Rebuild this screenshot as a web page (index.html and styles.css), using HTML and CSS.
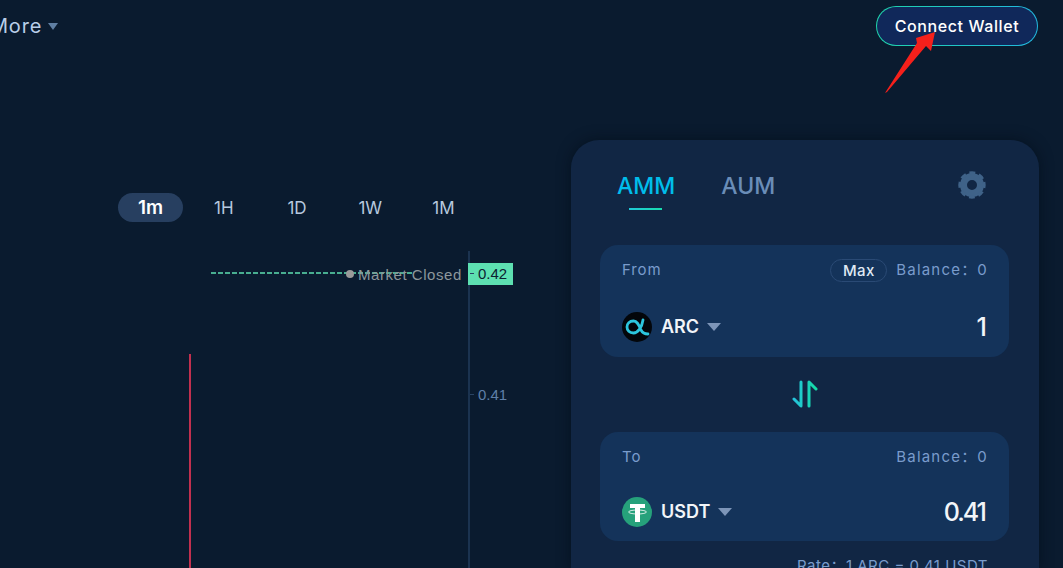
FILE: index.html
```html
<!DOCTYPE html>
<html lang="en">
<head>
    <meta charset="UTF-8">
    <title>Swap</title>
    <link rel="stylesheet" href="styles.css">
</head>
<body>
    <div class="top">
        <div class="nav-more">More <span class="caret caret-small"></span></div>
        <button class="connect">Connect Wallet</button>
    </div>

    <div class="main">
        <div class="chart-side">
            <div class="ranges">
                <span class="range active">1m</span>
                <span class="range">1H</span>
                <span class="range">1D</span>
                <span class="range">1W</span>
                <span class="range">1M</span>
            </div>
            <div class="chart">
                <svg class="price-line" width="201" height="2" viewBox="0 0 201 2">
                    <line x1="0" y1="1" x2="201" y2="1" stroke="#5de0b1" stroke-width="1.600" stroke-dasharray="5 2"/>
                </svg>
                <div class="market-dot"></div>
                <div class="market-text">Market Closed</div>
                <div class="axis"></div>
                <div class="price-tag">0.42</div>
                <div class="tick tick-now"></div>
                <div class="tick tick-low"></div>
                <div class="axis-label">0.41</div>
                <div class="candle"></div>
            </div>
        </div>

        <div class="card">
            <div class="tabs">
                <div class="tab active">AMM</div>
                <div class="tab">AUM</div>
                <svg class="gear" width="30" height="30" viewBox="0 0 30 30">
                    <circle cx="15" cy="15" r="8.5" fill="none" stroke="#3f6288" stroke-width="7"/>
                    <circle cx="15" cy="15" r="12" fill="none" stroke="#3f6288" stroke-width="3.4" stroke-dasharray="5.6 3.82" transform="rotate(-13.4 15 15)"/>
                </svg>
            </div>

            <div class="box">
                <div class="row">
                    <span class="label">From</span>
                    <span class="balance"><span class="max">Max</span>Balance：0</span>
                </div>
                <div class="row row-token">
                    <span class="token">
                        <svg class="coin" width="30" height="30" viewBox="0 0 30 30">
                            <circle cx="15" cy="15" r="15" fill="#03060a"/>
                            <path d="M21 8C20 15 16 21 11.500 21 7.500 21 5 18.500 5 15 5 11.500 7.500 9 11.500 9 16 9 17 14 19 18 20.500 21 23 22 26 22" fill="none" stroke="#2cc6de" stroke-width="2.800" stroke-linecap="round"/>
                        </svg>
                        ARC <span class="caret"></span>
                    </span>
                    <span class="amount">1</span>
                </div>
            </div>

            <div class="swap">
                <svg width="26" height="28" viewBox="0 0 26 28">
                    <defs>
                        <linearGradient id="swapGrad" x1="0" y1="0" x2="1" y2="0">
                            <stop offset="0" stop-color="#25c3dc"/>
                            <stop offset="1" stop-color="#14dba6"/>
                        </linearGradient>
                    </defs>
                    <path d="M9 2v24L2 19M17 26V2l7 7" fill="none" stroke="url(#swapGrad)" stroke-width="3" stroke-linecap="round" stroke-linejoin="round"/>
                </svg>
            </div>

            <div class="box box-to">
                <div class="row">
                    <span class="label">To</span>
                    <span class="balance">Balance：0</span>
                </div>
                <div class="row row-token">
                    <span class="token">
                        <svg class="coin" width="30" height="30" viewBox="0 0 30 30">
                            <circle cx="15" cy="15" r="15" fill="#26a17b"/>
                            <rect x="8" y="7" width="15" height="4" fill="#fff"/>
                            <rect x="13" y="7" width="5" height="18" fill="#fff"/>
                            <ellipse cx="15.500" cy="15" rx="9" ry="2" fill="none" stroke="#fff" stroke-width="0.8"/>
                        </svg>
                        USDT <span class="caret"></span>
                    </span>
                    <span class="amount">0.41</span>
                </div>
            </div>

            <div class="rate">Rate：1 ARC = 0.41 USDT</div>
        </div>
    </div>

    <svg class="pointer" width="60" height="70" viewBox="0 0 60 70">
        <polygon points="5,63 37,13 36,8 55,2 51,21 46,16 7,62" fill="#f5201b"/>
    </svg>
</body>
</html>
```

FILE: styles.css
```css
body {
    margin: 0;
    height: 568px;
    overflow: hidden;
    background-color: #0a1b2f;
    font-family: Inter, "Noto Sans CJK SC", sans-serif;
    position: relative;
}

.top {
    display: flex;
    justify-content: space-between;
    align-items: center;
    height: 40px;
    padding: 6px 25px 0 0;
}

.nav-more {
    margin-left: -10px;
    color: #b9cee8;
    font-size: 20px;
    letter-spacing: 0.8px;
    display: flex;
    align-items: center;
    gap: 6px;
}

.caret {
    display: inline-block;
    width: 0;
    height: 0;
    border-left: 7px solid transparent;
    border-right: 7px solid transparent;
    border-top: 8px solid #7d95b8;
    margin-left: 3px;
}

.caret-small {
    border-left-width: 5px;
    border-right-width: 5px;
    border-top-width: 7px;
    border-top-color: #5f7fa3;
    margin-left: 0;
}

.connect {
    width: 162px;
    height: 40px;
    border: 1px solid transparent;
    border-radius: 20px;
    background: linear-gradient(#10285a, #10285a) padding-box, linear-gradient(to right, #1fd4ab, #22b8e0) border-box;
    color: #fff;
    font-family: inherit;
    font-size: 16px;
    letter-spacing: 0.6px;
    font-weight: 500;
    padding: 0;
}

.main {
    display: flex;
    margin-top: 94px;
}

.chart-side {
    width: 571px;
    padding-top: 53px;
}

.ranges {
    display: flex;
    gap: 8.250px;
    margin-left: 118px;
}

.range {
    width: 65px;
    height: 29px;
    border-radius: 15px;
    text-align: center;
    line-height: 30px;
    font-size: 17px;
    color: #b7c9df;
}

.range.active {
    background-color: #273f60;
    color: #fff;
    font-weight: 600;
    font-size: 19px;
}

.chart {
    position: relative;
    width: 513px;
    height: 318px;
    margin-top: 28px;
    font-family: "Liberation Sans", Arial, sans-serif;
}

.axis {
    position: absolute;
    left: 468px;
    top: 1px;
    bottom: 0;
    width: 2px;
    background-color: #1b3350;
}

.price-line {
    position: absolute;
    left: 211px;
    top: 22px;
}

.market-dot {
    position: absolute;
    left: 346px;
    top: 20px;
    width: 8px;
    height: 8px;
    border-radius: 50%;
    background-color: #9a9a9a;
}

.market-text {
    position: absolute;
    left: 358px;
    top: 16px;
    font-size: 15px;
    letter-spacing: 0.55px;
    color: #8d979c;
}

.price-tag {
    position: absolute;
    left: 468px;
    top: 13px;
    width: 35px;
    height: 22px;
    padding-left: 10px;
    line-height: 22px;
    font-size: 15px;
    background-color: #5de0b1;
    color: #0c2030;
}

.tick {
    position: absolute;
    left: 470px;
    width: 4px;
    height: 1px;
    background-color: #2a4464;
}

.tick-now {
    top: 23px;
}

.tick-low {
    top: 144px;
}

.axis-label {
    position: absolute;
    left: 478px;
    top: 136px;
    font-size: 15px;
    color: #5f7fa8;
}

.candle {
    position: absolute;
    left: 189px;
    top: 104px;
    bottom: 0;
    width: 2px;
    background-color: #c2304f;
}

.card {
    width: 409px;
    height: 428px;
    padding: 0 30px 0 29px;
    background-color: #112644;
    border-radius: 28px 28px 0 0;
    box-shadow: 0 0 14px rgba(4, 12, 22, 0.6);
    flex-shrink: 0;
}

.tabs {
    display: flex;
    align-items: flex-start;
    height: 105px;
    padding-left: 17px;
    gap: 46px;
    position: relative;
}

.tab {
    margin-top: 32px;
    font-size: 23px;
    line-height: 28px;
    font-weight: 500;
    color: #6a8db8;
    position: relative;
}

.tab.active {
    color: #00bdeb;
}

.tab.active::after {
    content: "";
    position: absolute;
    left: 12px;
    right: 13px;
    top: 36px;
    height: 2px;
    background: linear-gradient(to right, #20c9d8, #18dcae);
}

.gear {
    margin-left: auto;
    margin-right: 22px;
    margin-top: 30px;
}

.box {
    height: 112px;
    padding: 0 22px;
    border-radius: 18px;
    background-color: #14335a;
    box-sizing: border-box;
}

.box-to {
    height: 109px;
}

.row {
    display: flex;
    justify-content: space-between;
    align-items: center;
    height: 48px;
    box-sizing: border-box;
    padding-top: 2px;
    font-size: 15px;
    line-height: 18px;
    letter-spacing: 0.9px;
    color: #7a9ccc;
}

.row-token {
    height: 30px;
    padding-top: 0;
    margin-top: 19px;
    letter-spacing: 0;
}

.box-to .row-token {
    margin-top: 17px;
}

.balance {
    display: flex;
    align-items: center;
    margin-right: -1px;
    letter-spacing: 1.2px;
}

.max {
    width: 55px;
    height: 21px;
    line-height: 21px;
    text-align: center;
    margin-right: 9px;
    border: 1px solid #2a4a75;
    border-radius: 12px;
    color: #dfe8f3;
    font-weight: 500;
    letter-spacing: 0.4px;
}

.token {
    display: flex;
    align-items: center;
    color: #f2f5f9;
    font-size: 18px;
    font-weight: 600;
}

.coin {
    margin-right: 9px;
}

.token .caret {
    margin-left: 8px;
}

.amount {
    margin-right: 2px;
    color: #f2f5f9;
    font-size: 25px;
    font-weight: 500;
    letter-spacing: -2px;
}

.swap {
    height: 75px;
    padding-bottom: 2px;
    box-sizing: border-box;
    display: flex;
    align-items: center;
    justify-content: center;
}

.rate {
    margin-top: 16px;
    padding-right: 21px;
    text-align: right;
    font-size: 15px;
    line-height: 18px;
    letter-spacing: 0.5px;
    color: #7a9ccc;
}

.pointer {
    position: absolute;
    left: 880px;
    top: 30px;
}
```
